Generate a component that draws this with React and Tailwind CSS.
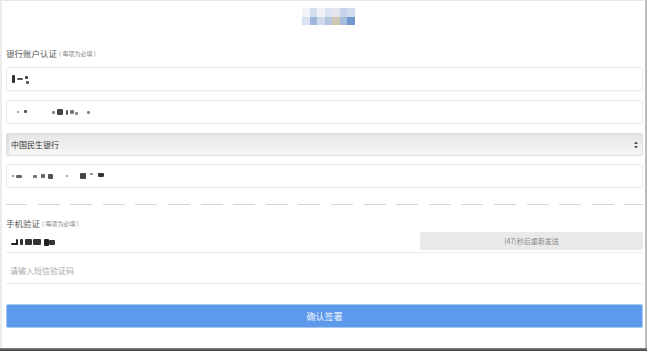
import React from "react";

const font = { fontFamily: '"Noto Sans CJK SC", "Noto Sans", sans-serif' };

// pixelated (mosaic) content of the screenshot: [left offset, width, height, colour, vertical shift]
function Blot({ items }) {
  return (
    <div className="relative h-full flex-1">
      {items.map(([x, w, h, c, dy], i) => (
        <span
          key={i}
          className="absolute top-1/2 rounded-[1px] blur-[0.4px]"
          style={{ left: x, width: w, height: h, background: c, marginTop: -h / 2 + (dy || 0) }}
        />
      ))}
    </div>
  );
}

const titleCells = [
  ["#f1f4f9", "#d3deee", "#eef2f8", "#dbe3f0", "#e3e6ec", "#c4d3ea", "#d0dcee"],
  ["#d9e2f0", "#9fb7da", "#cfdaec", "#b3c5df", "#cfc8b4", "#a7bddc", "#7199cf"],
];

function Input({ children, className = "" }) {
  return (
    <div
      className={`flex h-[24px] items-center rounded-[2px] border border-[#ececec] bg-white pl-[4px] shadow-[0_1px_1px_rgba(0,0,0,0.03)] ${className}`}
    >
      {children}
    </div>
  );
}

function Label({ title, className = "" }) {
  return (
    <div className={`flex h-[12px] items-center leading-none ${className}`}>
      <span className="text-[8.5px] text-[#555]">{title}</span>
      <span className="ml-[2px] mt-[1px] text-[6px] text-[#888]">( 每项为必填 )</span>
    </div>
  );
}

export default function App() {
  return (
    <div className="flex h-[351px] w-[647px] flex-col bg-white" style={font}>
      <div className="flex flex-1 flex-col border-l-2 border-r-2 border-t border-l-[#ececec] border-r-[#bcbcbc] border-t-[#e6e6e6] pl-[4px] pr-[0px]">
        <div className="mt-[7px] flex justify-center pl-[6px]">
          <div className="grid grid-cols-7 blur-[0.5px]">
            {titleCells.flat().map((c, i) => (
              <span key={i} className="h-[8.5px] w-[7.5px]" style={{ background: c }} />
            ))}
          </div>
        </div>

        <div className="mr-[2px]">
          <Label title="银行账户认证" className="mt-[22px]" />

          <Input className="mt-[8px]">
            <Blot
              items={[
                [1, 3, 8, "#333"],
                [6, 6, 2, "#555"],
                [14, 3, 3, "#444", -2],
                [15, 3, 3, "#555", 3],
              ]}
            />
          </Input>

          <Input className="mt-[9px]">
            <Blot
              items={[
                [6, 2, 2, "#888"],
                [13, 3, 3, "#555", -1],
                [41, 3, 3, "#888"],
                [46, 6, 6, "#444"],
                [55, 2, 5, "#555"],
                [59, 4, 4, "#777"],
                [64, 3, 3, "#888", 1],
                [76, 3, 3, "#888"],
              ]}
            />
          </Input>

          <div className="mt-[9px] flex h-[23px] items-center justify-between rounded-[2px] border border-[#dedede] bg-gradient-to-b from-[#e6e6e6] to-[#f7f7f7] pl-[4px] pr-[4px] shadow-[inset_2px_0_2px_rgba(0,0,0,0.06)]">
            <span className="text-[8px] leading-none text-[#333]">中国民生银行</span>
            <svg width="4" height="8" viewBox="0 0 4 8">
              <path d="M0 3 L2 0.5 L4 3 Z M0 5 L2 7.5 L4 5 Z" fill="#555" />
            </svg>
          </div>

          <Input className="mt-[8px]">
            <Blot
              items={[
                [1, 2, 2, "#777"],
                [5, 6, 3, "#666"],
                [22, 4, 3, "#777"],
                [30, 4, 4, "#666"],
                [37, 5, 5, "#555"],
                [55, 2, 2, "#888"],
                [69, 6, 6, "#444"],
                [79, 3, 2, "#888", -2],
                [87, 6, 4, "#333", -1],
              ]}
            />
          </Input>

          <div className="mt-[16px] h-0 border-t border-dashed border-[#cfcfcf] [border-image:repeating-linear-gradient(90deg,#d6d6d6_0_22px,transparent_22px_32.5px)_1]" />

          <Label title="手机验证" className="mt-[12px]" />

          <div className="mt-[3px] flex h-[21px] items-stretch border-b border-[#ececec]">
            <div className="flex flex-1 items-center">
              <Blot
                items={[
                  [5, 7, 2, "#222", 2],
                  [10, 2, 6, "#222"],
                  [14, 3, 6, "#333"],
                  [19, 7, 6, "#333"],
                  [27, 8, 6, "#333"],
                  [38, 5, 7, "#222"],
                  [43, 6, 5, "#333"],
                ]}
              />
            </div>
            <div className="mb-[2px] flex w-[223px] items-center justify-center rounded-[2px] bg-[#e9e9e9] text-[7px] leading-none text-[#888]">
              (47)秒后重新发送
            </div>
          </div>

          <div className="flex h-[31px] items-center border-b border-[#ececec] pl-[4px] pt-[6px]">
            <span className="text-[8px] leading-none text-[#aaa]">请输入短信验证码</span>
          </div>

          <div className="mt-[20px] flex h-[24px] items-center justify-center rounded-[2px] border border-[#a8c8f2] bg-[#5e9aeb] text-[9px] leading-none text-[#eef4fd]">
            确认签署
          </div>
        </div>
      </div>
      <div className="h-[3px] bg-gradient-to-b from-[#8a8a8a] to-[#3a3a3a]" />
    </div>
  );
}
